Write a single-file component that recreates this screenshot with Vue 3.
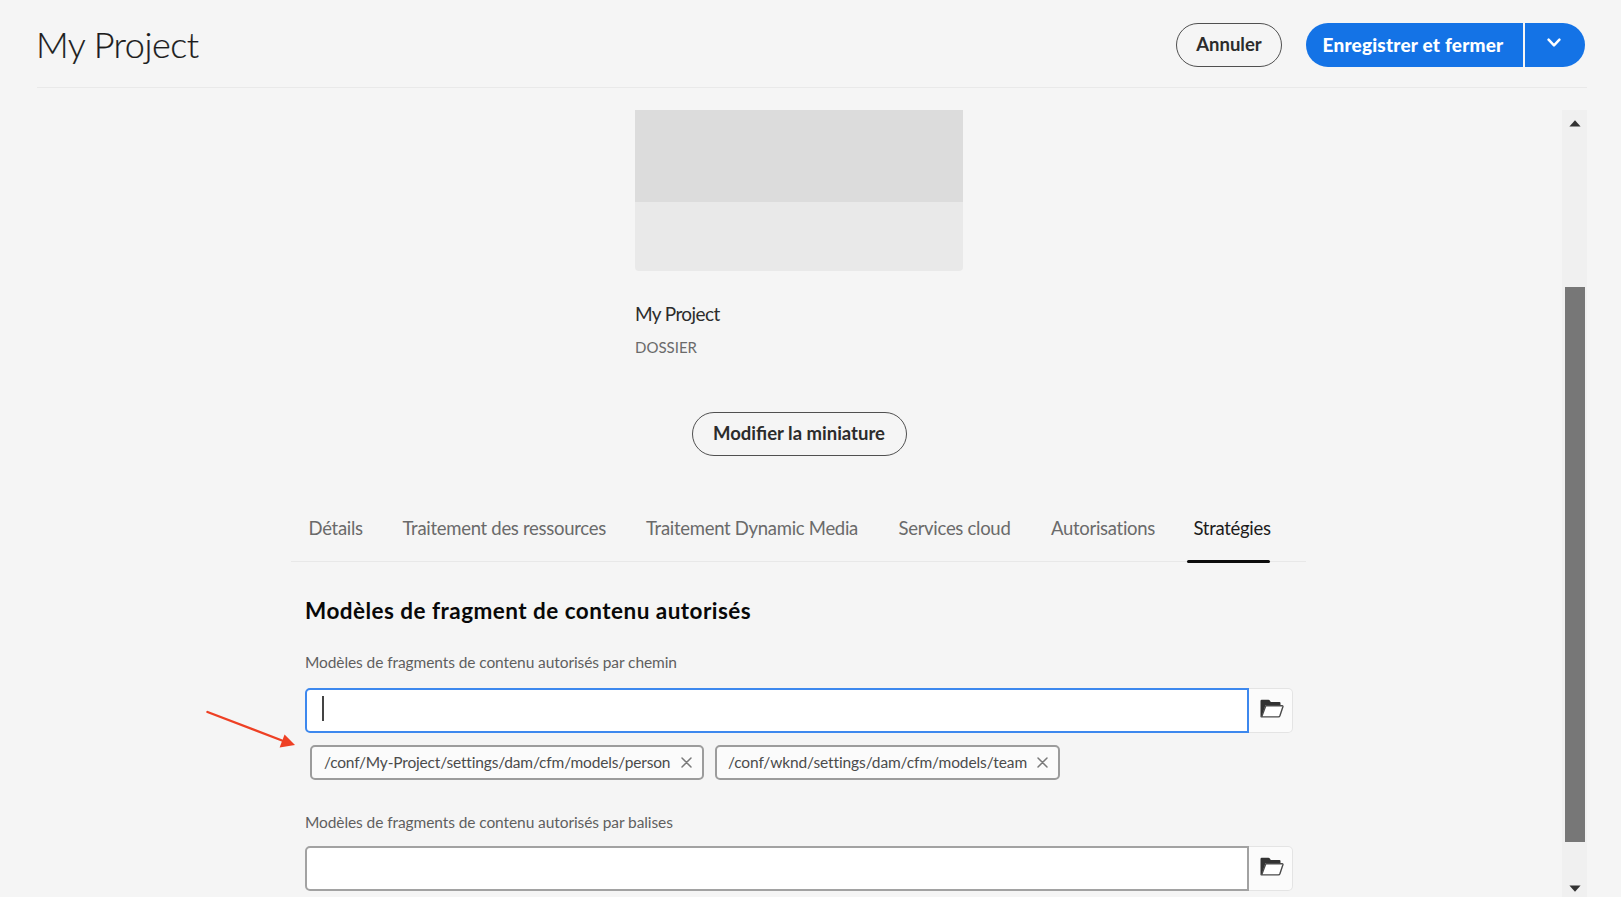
<script setup>
const tabs = ['Détails', 'Traitement des ressources', 'Traitement Dynamic Media', 'Services cloud', 'Autorisations', 'Stratégies']
const activeTab = 'Stratégies'
const fields = [
  {
    id: 'path',
    label: 'Modèles de fragments de contenu autorisés par chemin',
    focused: true,
    tags: ['/conf/My-Project/settings/dam/cfm/models/person', '/conf/wknd/settings/dam/cfm/models/team'],
  },
  { id: 'tags', label: 'Modèles de fragments de contenu autorisés par balises', focused: false, tags: [] },
]
</script>

<template>
  <div class="page">
    <header class="header">
      <h1 class="title">My Project</h1>
      <div class="actions">
        <button class="pill cancel">Annuler</button>
        <div class="split">
          <button class="save">Enregistrer et fermer</button>
          <button class="more" aria-label="Plus">
            <svg width="14" height="10" viewBox="0 0 14 10"><path d="M1.6 1.7 L7 7.3 L12.4 1.7" fill="none" stroke="#fff" stroke-width="2.5" stroke-linecap="round" stroke-linejoin="round" /></svg>
          </button>
        </div>
      </div>
    </header>

    <div class="body">
      <main class="content">
        <section class="card">
          <div class="thumb"></div>
          <div class="name">My Project</div>
          <div class="kind">DOSSIER</div>
          <button class="pill edit">Modifier la miniature</button>
        </section>

        <nav class="tabs">
          <a v-for="t in tabs" :key="t" class="tab" :class="{ active: t === activeTab }"><span>{{ t }}</span></a>
        </nav>

        <section class="form">
          <h2 class="heading">Modèles de fragment de contenu autorisés</h2>
          <div v-for="f in fields" :key="f.id" class="field" :class="f.id">
            <div class="label">{{ f.label }}</div>
            <div class="row">
              <div class="input" :class="{ focused: f.focused }"><i v-if="f.focused" class="caret"></i></div>
              <button class="browse" aria-label="Parcourir">
                <svg width="24" height="20" viewBox="0 0 24 20">
                  <path d="M0.5 18.5 V2 Q0.5 0.8 1.7 0.8 H8.5 Q9.3 0.8 9.8 1.6 L10.8 3 H19.5 Q20.5 3 20.5 4 V6 H5.5 L2.2 16.5 Z" fill="#323232" />
                  <path d="M5.8 6.8 H22.2 Q23.2 6.8 22.9 7.8 L19.9 16.8 Q19.5 17.9 18.4 17.9 H1.6 Z" fill="#fff" stroke="#4b4b4b" stroke-width="1.4" stroke-linejoin="round" />
                </svg>
              </button>
            </div>
            <div v-if="f.tags.length" class="chips">
              <div v-for="tag in f.tags" :key="tag" class="chip">
                <span class="chip-text">{{ tag }}</span>
                <svg width="11" height="11" viewBox="0 0 11 11"><path d="M1 1 L10 10 M10 1 L1 10" stroke="#7a7a7a" stroke-width="1.5" stroke-linecap="round" /></svg>
              </div>
            </div>
          </div>
        </section>
      </main>

      <aside class="scrollbar">
        <svg class="arrow" width="12" height="7" viewBox="0 0 12 7"><path d="M6 0.3 L11.6 6.6 H0.4 Z" fill="#333" /></svg>
        <div class="thumb-bar"></div>
        <svg class="arrow" width="12" height="7" viewBox="0 0 12 7"><path d="M6 6.7 L11.6 0.4 H0.4 Z" fill="#333" /></svg>
      </aside>
    </div>

    <svg class="pointer" width="92" height="40" viewBox="0 0 92 40">
      <path d="M1.5 3 L76 31.5" stroke="#ee4024" stroke-width="2.4" stroke-linecap="round" />
      <path d="M89 36 L78.6 25.6 L73.6 38.6 Z" fill="#ee4024" />
    </svg>
  </div>
</template>

<style>
body { margin: 0; background: #f5f5f5; overflow: hidden; }
</style>

<style scoped>
.page {
  position: relative;
  width: 1621px;
  height: 897px;
  overflow: hidden;
  box-sizing: border-box;
  padding: 0 34px 0 37px;
  background: #f5f5f5;
  font-family: Lato, "Open Sans", "Liberation Sans", sans-serif;
  color: #2c2c2c;
}
* { box-sizing: border-box; }
button { font-family: inherit; padding: 0; margin: 0; border: 0; white-space: nowrap; }
.header {
  display: flex;
  justify-content: space-between;
  height: 88px;
  border-bottom: 1px solid #e9e9e9;
}
.title { margin: 22px 0 0 -1px; font-size: 36px; line-height: 44px; font-weight: 300; letter-spacing: -0.5px; color: #1c1c1c; -webkit-text-stroke: 0.2px #1c1c1c; }
.actions { display: flex; gap: 24px; padding: 23px 2px 0 0; }
.pill {
  height: 44px;
  border: 1.5px solid #505050;
  border-radius: 22px;
  background: transparent;
  color: #2c2c2c;
  font-size: 18.5px;
  font-weight: 700;
}
.cancel { width: 106px; line-height: 38px; padding-bottom: 3px; }
.split { display: flex; gap: 2px; width: 279px; height: 44px; border-radius: 22px; overflow: hidden; background: #f5f5f5; }
.save { width: 217px; background: #1473e6; color: #fff; font-size: 19px; font-weight: 900; letter-spacing: 0.2px; padding: 0 3px 2px 0; }
.more { flex: 1; display: flex; justify-content: center; align-items: flex-start; padding: 15px 3px 0 0; background: #1473e6; }
.body { display: flex; justify-content: space-between; height: 787px; margin-top: 22px; }
.content { width: 1015px; margin-left: 254px; }
.card { display: flex; flex-direction: column; width: 328px; margin-left: 344px; }
.thumb { height: 161px; border-radius: 0 0 4px 4px; background: linear-gradient(#dcdcdc 92px, #e9e9e9 92px); }
.name { margin-top: 30px; font-size: 19px; line-height: 26px; letter-spacing: -0.6px; }
.kind { margin-top: 10px; font-size: 15px; line-height: 20px; color: #6a6a6a; }
.edit { align-self: center; width: 215px; margin-top: 55px; line-height: 38px; padding-bottom: 3px; }
.tabs {
  display: grid;
  grid-template-columns: 94px 243.5px 252.5px 152.5px 142.5px 79px;
  height: 106px;
  padding: 55px 0 0 17.5px;
  border-bottom: 1px solid #e8e8e8;
}
.tab { position: relative; font-size: 18.5px; line-height: 34px; letter-spacing: -0.29px; color: #6a6a6a; white-space: nowrap; }
.tab.active { color: #1c1c1c; }
.tab.active::after {
  content: "";
  position: absolute;
  left: -7px;
  bottom: -2px;
  width: 83px;
  height: 3px;
  border-radius: 2px;
  background: #0d0d0d;
}
.form { padding-left: 14px; }
.heading { margin: 32px 0 0; font-size: 22.5px; line-height: 34px; font-weight: 700; letter-spacing: 0.47px; color: #080808; white-space: nowrap; }
.label { font-size: 15.5px; line-height: 22px; letter-spacing: -0.09px; color: #5f5f5f; }
.path .label { margin-top: 23px; }
.tags .label { margin-top: 31px; }
.row { display: flex; height: 45px; margin-top: 15px; }
.tags .row { margin-top: 13px; }
.input { width: 943.5px; padding: 6px 0 0 15px; border: 2px solid #a2a2a2; border-radius: 5px 0 0 5px; background: #fff; }
.input.focused { border-color: #3d88ee; }
.caret { display: block; width: 2px; height: 25px; background: #444; }
.browse { display: flex; width: 44px; padding: 10px 0 0 11px; border: 1.5px solid #e4e4e4; border-left: 0; border-radius: 0 5px 5px 0; background: #fbfbfb; }
.chips { display: flex; gap: 11px; margin: 12px 0 0 5px; }
.chip { display: flex; align-items: center; justify-content: space-between; width: 394px; height: 35px; padding: 0 10px 1px 12px; border: 2px solid #9c9c9c; border-radius: 5px; background: #fbfbfb; }
.chip + .chip { width: 345px; padding-left: 11px; }
.chip-text { font-size: 15.5px; line-height: 30px; letter-spacing: -0.17px; color: #4b4b4b; white-space: nowrap; }
.chip + .chip .chip-text { letter-spacing: -0.11px; }
.scrollbar { display: flex; flex-direction: column; align-items: center; width: 25px; padding: 10px 0 5px; background: #f0f0f0; }
.thumb-bar { width: 20px; height: 556px; margin: 160px 0 43px; background: #777; }
.arrow { flex: none; }
.pointer { position: absolute; left: 206px; top: 709px; }
</style>
